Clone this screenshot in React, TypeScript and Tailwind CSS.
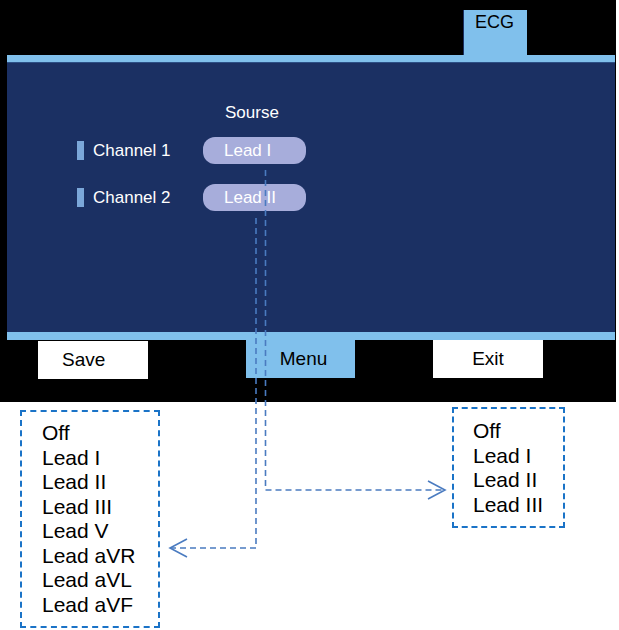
import React from "react";

const font = { fontFamily: '"Liberation Sans", Arial, sans-serif' };

const bigList = ["Off", "Lead I", "Lead II", "Lead III", "Lead V", "Lead aVR", "Lead aVL", "Lead aVF"];
const smallList = ["Off", "Lead I", "Lead II", "Lead III"];

function ChannelRow({ label, lead }: { label: string; lead: string }) {
  return (
    <div className="flex items-center pl-[70px]">
      <div className="flex w-[126px] items-center gap-[9px]">
        <span className="h-[19px] w-[7px] bg-[#7ba7d9]" />
        <span className="text-[17px] leading-[20px] text-white">{label}</span>
      </div>
      <div className="flex h-[27px] w-[103px] items-center rounded-[12px] bg-[#a7addb] pl-[21px] text-[17px] leading-[20px] text-white">
        {lead}
      </div>
    </div>
  );
}

// dashed connectors between the lead pills and the option lists
function Connectors() {
  return (
    <svg className="pointer-events-none absolute left-0 top-0" width="619" height="630" viewBox="0 0 619 630">
      <g fill="none" stroke="#4a7bc0" strokeWidth="1.6" strokeDasharray="6 4">
        <polyline points="265.5,170 265.5,490 444,490" />
        <polyline points="256,218 256,548 171,548" />
      </g>
      <g fill="none" stroke="#4a7bc0" strokeWidth="1.6">
        <polyline points="428,481 445,490 428,499" />
        <polyline points="187,539 170,548 187,557" />
      </g>
    </svg>
  );
}

export default function App() {
  return (
    <div className="relative h-[630px] w-[619px] overflow-hidden bg-white" style={font}>
      <div className="flex h-[402px] w-[616px] flex-col bg-black pl-[7px] pr-[1px]">
        <div className="flex h-[55px]">
          <div className="ml-[456px] mt-[10px] h-[45px] w-[64px] border-l border-[#1b3063] bg-[#80c0ec] pl-[11px] pt-[2px] text-[18px] leading-[21px] text-black">
            ECG
          </div>
        </div>
        <div className="h-[8px] border-b border-[#2c4f86] bg-[#80c0ec]" />
        <div className="flex h-[269px] flex-col bg-[#1b3063]">
          <div className="mt-[40px] pl-[218px] text-[17px] leading-[20px] text-white">Sourse</div>
          <div className="mt-[14px] flex flex-col gap-[20px]">
            <ChannelRow label="Channel 1" lead="Lead I" />
            <ChannelRow label="Channel 2" lead="Lead II" />
          </div>
        </div>
        <div className="h-[8px] bg-[#80c0ec]" />
        <div className="flex items-start text-[19px] leading-[22px] text-black">
          <div className="ml-[31px] mt-[1px] flex h-[38px] w-[110px] items-center bg-white pl-[24px]">Save</div>
          <div className="ml-[98px] flex h-[38px] w-[109px] items-center justify-center bg-[#80c0ec] pl-[6px]">Menu</div>
          <div className="ml-[78px] flex h-[38px] w-[110px] items-center justify-center bg-white">Exit</div>
        </div>
      </div>

      <div className="flex items-start text-[21px] leading-[24.5px] text-black">
        <div className="ml-[20px] mt-[8px] h-[218px] w-[140px] border-2 border-dashed border-[#1a73c7] pl-[20px] pt-[9px]">
          {bigList.map((t) => (
            <div key={t}>{t}</div>
          ))}
        </div>
        <div className="ml-[292px] mt-[5px] h-[121px] w-[113px] border-2 border-dashed border-[#1a73c7] pl-[19px] pt-[10px]">
          {smallList.map((t) => (
            <div key={t}>{t}</div>
          ))}
        </div>
      </div>

      <Connectors />
    </div>
  );
}
